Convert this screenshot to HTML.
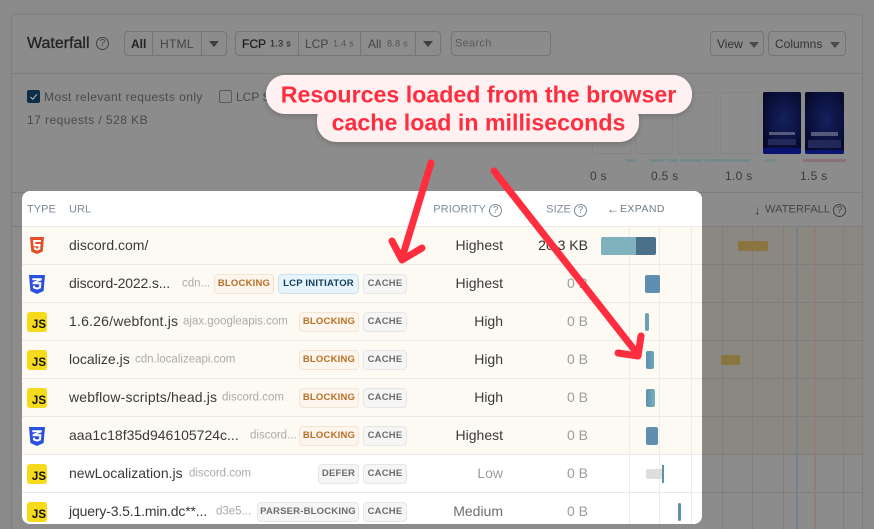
<!DOCTYPE html>
<html style="width:874px;height:529px;overflow:hidden"><head><meta charset="utf-8"><style>
*{box-sizing:border-box}
html,body{margin:0;padding:0}
body{width:874px;height:529px;overflow:hidden;background:#8a8a8a;font-family:"Liberation Sans",sans-serif;color:#333}
#root{position:absolute;left:0;top:0;width:874px;height:529px;overflow:hidden;background:#8a8a8a}
.a{position:absolute;white-space:nowrap}
.t{position:absolute;white-space:nowrap;transform:translateY(-50%);line-height:1}
.r{position:absolute;white-space:nowrap;transform:translateY(-50%);line-height:1;text-align:right}
.b{position:absolute;height:20px;border-radius:4px;font-size:9.5px;font-weight:bold;line-height:18px;text-align:center;letter-spacing:.2px;border:1px solid}
.bl{background:#fdf6ee;border-color:#f3e4d4;color:#b96f24}
.ca{background:#f5f5f5;border-color:#e6e6e6;color:#6c6c6c}
.lc{background:#e7f4fb;border-color:#c9e2f0;color:#123f5c}
.rw{position:absolute;left:0;width:680px;height:38px;border-bottom:1px solid #e9e9e6}
.u{position:absolute;white-space:nowrap;transform:translateY(-50%);line-height:1;font-size:14px;color:#3a3a3a;left:47px}
.d{position:absolute;white-space:nowrap;transform:translateY(-50%);line-height:1;font-size:11.5px;color:#ababab}
.p{position:absolute;white-space:nowrap;transform:translateY(-50%);line-height:1;font-size:14px;color:#3a3a3a;right:199px}
.s{position:absolute;white-space:nowrap;transform:translateY(-50%);line-height:1;font-size:14px;color:#9c9c9c;right:114px}
.js{position:absolute;left:5px;width:20px;height:20px;border-radius:3px;background:#f6da1c;color:#111;font-size:11.5px;font-weight:bold;line-height:1;text-align:right;padding:8px 1px 0 0}
.bar{position:absolute;border-radius:2px}
.th{position:absolute;top:92px;height:62px;border:1px solid #858585;border-radius:2px;background:#8c8c8c}
.dk{position:absolute;top:92px;height:62px;border-radius:2px;overflow:hidden;background:radial-gradient(ellipse at 55% 45%,#141f5c 0,#0c1240 50%,#03041a 100%)}
.st{position:absolute;top:159px;height:3px}
.q{position:absolute;border-radius:50%;border:1px solid;font-size:10px;line-height:11px;text-align:center;width:13px;height:13px}
.g{position:absolute;width:1px}
.btn{position:absolute;top:31px;height:25px;border:1px solid #757575;border-radius:4px}
.dv{position:absolute;top:31px;width:1px;height:25px;background:#757575}
.tri{position:absolute;width:0;height:0;border-left:5px solid transparent;border-right:5px solid transparent;border-top:6px solid #3f3f3f}
</style></head><body><div id="root">

<!-- card -->
<div class="a" style="left:11px;top:14px;width:852px;height:515px;background:#8c8c8c;border:1px solid #7e7e7e;border-bottom:0;border-radius:4px 4px 0 0"></div>
<div class="a" style="left:12px;top:73px;width:850px;height:1px;background:#7e7e7e"></div>
<div class="a" style="left:12px;top:192px;width:850px;height:1px;background:#7e7e7e"></div>

<!-- toolbar -->
<div class="t" style="left:27px;top:44px;font-size:16px;color:#222;-webkit-text-stroke:.3px #222">Waterfall</div>
<div class="q" style="left:96px;top:37px;border-color:#444;color:#444">?</div>

<div class="btn" style="left:124px;width:103px"></div>
<div class="dv" style="left:152px"></div><div class="dv" style="left:201px"></div>
<div class="t" style="left:131px;top:44px;font-size:12px;font-weight:bold;color:#222">All</div>
<div class="t" style="left:160px;top:44px;font-size:12px;color:#444;letter-spacing:.3px">HTML</div>
<div class="tri" style="left:209px;top:41px"></div>

<div class="btn" style="left:235px;width:206px"></div>
<div class="dv" style="left:298px"></div><div class="dv" style="left:360px"></div><div class="dv" style="left:415px"></div>
<div class="t" style="left:242px;top:44px;font-size:12px;color:#222;-webkit-text-stroke:.3px #222">FCP</div>
<div class="t" style="left:270px;top:44px;font-size:9px;color:#333;letter-spacing:.3px;-webkit-text-stroke:.2px #333">1.3 s</div>
<div class="t" style="left:305px;top:44px;font-size:12px;color:#444">LCP</div>
<div class="t" style="left:333px;top:44px;font-size:9px;color:#555;letter-spacing:.3px">1.4 s</div>
<div class="t" style="left:368px;top:44px;font-size:12px;color:#444">All</div>
<div class="t" style="left:387px;top:44px;font-size:9px;color:#555;letter-spacing:.3px">8.8 s</div>
<div class="tri" style="left:423px;top:41px"></div>

<div class="btn" style="left:451px;width:100px"></div>
<div class="t" style="left:455px;top:44px;font-size:11px;color:#5a5a5a;letter-spacing:.3px">Search</div>

<div class="btn" style="left:710px;width:54px"></div>
<div class="t" style="left:717px;top:44px;font-size:12px;color:#333">View</div>
<div class="tri" style="left:749px;top:42px;border-top-color:#4a4a4a"></div>
<div class="btn" style="left:768px;width:78px"></div>
<div class="t" style="left:775px;top:44px;font-size:12px;color:#333">Columns</div>
<div class="tri" style="left:830px;top:42px;border-top-color:#4a4a4a"></div>

<!-- filters -->
<div class="a" style="left:27px;top:90px;width:13px;height:13px;border-radius:2px;background:#0e2e47"></div>
<svg class="a" style="left:27px;top:90px" width="13" height="13"><path d="M3.5 7l2.3 2.3 4-5" fill="none" stroke="#b8c4cc" stroke-width="1"/></svg>
<div class="t" style="left:44px;top:97px;font-size:12px;color:#4a4a4a;letter-spacing:.45px">Most relevant requests only</div>
<div class="a" style="left:219px;top:90px;width:13px;height:13px;border-radius:2px;border:1px solid #5a5a5a"></div>
<div class="t" style="left:236px;top:97px;font-size:12px;color:#4a4a4a">LCP Subparts</div>
<div class="t" style="left:27px;top:120px;font-size:12px;color:#4a4a4a;letter-spacing:.45px">17 requests / 528 KB</div>

<!-- thumbnails -->
<div class="th" style="left:592px;width:39px"></div>
<div class="th" style="left:635px;width:38px"></div>
<div class="th" style="left:677px;width:39px"></div>
<div class="th" style="left:720px;width:39px"></div>
<div class="dk" style="left:763px;width:38px"><div style="position:absolute;left:0;right:0;bottom:0;height:6px;background:#0a1470"></div><div style="position:absolute;left:6px;right:6px;top:40px;height:3px;background:#55597c"></div><div style="position:absolute;left:5px;right:5px;top:47px;height:6px;background:#222858"></div></div>
<div class="dk" style="left:805px;width:39px"><div style="position:absolute;left:0;right:0;bottom:0;height:4px;background:#0a1470"></div><div style="position:absolute;left:6px;right:6px;top:40px;height:4px;background:#55597c"></div><div style="position:absolute;left:3px;right:3px;top:48px;height:8px;background:#222858"></div></div>

<div class="st" style="left:626px;width:10px;background:#75898d"></div>
<div class="st" style="left:650px;width:15px;background:#75898d"></div>
<div class="st" style="left:668px;width:10px;background:#75898d"></div>
<div class="st" style="left:680px;width:22px;background:#75898d"></div>
<div class="st" style="left:705px;width:45px;background:#75898d"></div>
<div class="st" style="left:765px;width:10px;background:#75898d"></div>
<div class="st" style="left:803px;width:43px;background:#8a6f7c"></div>

<div class="t" style="left:590px;top:176px;font-size:12px;color:#3c3c3c;letter-spacing:.3px">0 s</div>
<div class="t" style="left:651px;top:176px;font-size:12px;color:#3c3c3c;letter-spacing:.3px">0.5 s</div>
<div class="t" style="left:725px;top:176px;font-size:12px;color:#3c3c3c;letter-spacing:.3px">1.0 s</div>
<div class="t" style="left:800px;top:176px;font-size:12px;color:#3c3c3c;letter-spacing:.3px">1.5 s</div>

<!-- dim right side rows -->
<div class="a" style="left:702px;top:227px;width:160px;height:228px;background:#8a8880"></div>
<div class="a" style="left:12px;top:226px;width:850px;height:1px;background:#7e7e7e"></div>
<div class="a" style="left:702px;top:264px;width:160px;height:1px;background:#7e7d78"></div>
<div class="a" style="left:702px;top:302px;width:160px;height:1px;background:#7e7d78"></div>
<div class="a" style="left:702px;top:340px;width:160px;height:1px;background:#7e7d78"></div>
<div class="a" style="left:702px;top:378px;width:160px;height:1px;background:#7e7d78"></div>
<div class="a" style="left:702px;top:416px;width:160px;height:1px;background:#7e7d78"></div>
<div class="a" style="left:702px;top:454px;width:160px;height:1px;background:#7e7d78"></div>
<div class="a" style="left:702px;top:492px;width:160px;height:1px;background:#7e7d78"></div>
<div class="g" style="left:722px;top:227px;height:302px;background:#7f7f7b"></div>
<div class="g" style="left:752px;top:227px;height:302px;background:#7f7f7b"></div>
<div class="g" style="left:783px;top:227px;height:302px;background:#7f7f7b"></div>
<div class="g" style="left:843px;top:227px;height:302px;background:#7f7f7b"></div>
<div class="a" style="left:796px;top:227px;width:2px;height:302px;background:#77808f"></div>
<div class="a" style="left:814px;top:227px;width:2px;height:302px;background:#927e76"></div>
<div class="bar" style="left:738px;top:241px;width:30px;height:10px;background:#8a7440"></div>
<div class="bar" style="left:721px;top:355px;width:19px;height:10px;background:#8a7440"></div>
<div class="t" style="left:754px;top:210px;font-size:13px;color:#444">↓</div>
<div class="t" style="left:765px;top:210px;font-size:11px;color:#444;letter-spacing:.1px">WATERFALL</div>
<div class="q" style="left:833px;top:204px;border-color:#444;color:#444">?</div>

<!-- white panel -->
<div class="a" style="left:22px;top:191px;width:680px;height:333px;background:#fff;border-radius:8px;overflow:hidden">
  <div class="a" style="left:0;top:36px;width:680px;height:228px;background:#fdfaf4"></div>
  <div class="rw" style="top:-3px;height:39px"></div>
  <div class="rw" style="top:36px"></div>
  <div class="rw" style="top:74px"></div>
  <div class="rw" style="top:112px"></div>
  <div class="rw" style="top:150px"></div>
  <div class="rw" style="top:188px"></div>
  <div class="rw" style="top:226px"></div>
  <div class="rw" style="top:264px"></div>
  <div class="g" style="left:607px;top:36px;height:297px;background:#ebebe7"></div>
  <div class="g" style="left:637px;top:36px;height:297px;background:#ebebe7"></div>
  <div class="g" style="left:669px;top:36px;height:297px;background:#ebebe7"></div>

  <div class="t" style="left:5px;top:19px;font-size:11px;color:#7d8b99;letter-spacing:.05px">TYPE</div>
  <div class="t" style="left:47px;top:19px;font-size:11px;color:#7d8b99;letter-spacing:.05px">URL</div>
  <div class="r" style="right:216px;top:19px;font-size:11px;color:#7d8b99;letter-spacing:.1px">PRIORITY</div>
  <div class="q" style="left:467px;top:13px;border-color:#7d8b99;color:#7d8b99">?</div>
  <div class="r" style="right:131px;top:19px;font-size:11px;color:#7d8b99;letter-spacing:.1px">SIZE</div>
  <div class="q" style="left:552px;top:13px;border-color:#7d8b99;color:#7d8b99">?</div>
  <div class="t" style="left:585px;top:18px;font-size:12px;color:#5d6a76">←</div>
  <div class="t" style="left:598px;top:18px;font-size:10.5px;color:#6f7c88;letter-spacing:.4px">EXPAND</div>

  <!-- row 1 -->
  <svg class="a" style="left:8px;top:46px" width="14" height="17" viewBox="0 0 14 17"><path d="M0 0h14l-1.3 14.6L7 17l-5.7-2.4z" fill="#e44d26"/><path d="M3 3h8l-.2 2H5.2l.2 2h5.2l-.5 5.5L7 13.6l-3-1.1-.2-2.3h1.9l.1 1 1.2.4 1.2-.4.2-1.9H3.5z" fill="#fff"/></svg>
  <div class="u" style="top:54px">discord.com/</div>
  <div class="p" style="top:54px">Highest</div>
  <div class="s" style="top:54px;color:#333">20.3 KB</div>
  <div class="bar" style="left:579px;top:46px;width:35px;height:18px;background:#7fb2bc;border-radius:2px 0 0 2px"></div>
  <div class="bar" style="left:614px;top:46px;width:20px;height:18px;background:#4a7189;border-radius:0 2px 2px 0"></div>

  <!-- row 2 -->
  <svg class="a" style="left:7px;top:84px" width="16" height="19" viewBox="0 0 16 19"><path d="M0 0h16l-1.4 16L8 19l-6.6-3z" fill="#2a50e0"/><path d="M3.2 3.2h9.6l-.2 2-5 2.1h4.8l-.5 6L8 14.6l-3.9-1.3-.2-2.6h2l.1 1.2 2 .6 2-.6.2-2.6H3.7l-.2-1.9 5-2.1H3.4z" fill="#fff"/></svg>
  <div class="u" style="top:92px;letter-spacing:-.15px">discord-2022.s...</div>
  <div class="d" style="left:160px;top:93px">cdn...</div>
  <div class="b bl" style="left:192px;top:83px;width:60px">BLOCKING</div>
  <div class="b lc" style="left:256px;top:83px;width:81px">LCP INITIATOR</div>
  <div class="b ca" style="left:341px;top:83px;width:44px">CACHE</div>
  <div class="p" style="top:92px">Highest</div>
  <div class="s" style="top:92px">0 B</div>
  <div class="bar" style="left:623px;top:84px;width:15px;height:18px;background:#5f8fae"></div>

  <!-- row 3 -->
  <div class="js" style="top:121px">JS</div>
  <div class="u" style="top:130px;letter-spacing:.2px">1.6.26/webfont.js</div>
  <div class="d" style="left:161px;top:131px">ajax.googleapis.com</div>
  <div class="b bl" style="left:277px;top:121px;width:60px">BLOCKING</div>
  <div class="b ca" style="left:341px;top:121px;width:44px">CACHE</div>
  <div class="p" style="top:130px">High</div>
  <div class="s" style="top:130px">0 B</div>
  <div class="bar" style="left:623px;top:122px;width:4px;height:18px;background:#6ba0b5"></div>

  <!-- row 4 -->
  <div class="js" style="top:159px">JS</div>
  <div class="u" style="top:168px">localize.js</div>
  <div class="d" style="left:113px;top:169px">cdn.localizeapi.com</div>
  <div class="b bl" style="left:277px;top:159px;width:60px">BLOCKING</div>
  <div class="b ca" style="left:341px;top:159px;width:44px">CACHE</div>
  <div class="p" style="top:168px">High</div>
  <div class="s" style="top:168px">0 B</div>
  <div class="bar" style="left:624px;top:160px;width:8px;height:18px;background:linear-gradient(90deg,#5f8fae,#6ba8b8)"></div>

  <!-- row 5 -->
  <div class="js" style="top:197px">JS</div>
  <div class="u" style="top:206px;letter-spacing:.15px">webflow-scripts/head.js</div>
  <div class="d" style="left:200px;top:207px">discord.com</div>
  <div class="b bl" style="left:277px;top:197px;width:60px">BLOCKING</div>
  <div class="b ca" style="left:341px;top:197px;width:44px">CACHE</div>
  <div class="p" style="top:206px">High</div>
  <div class="s" style="top:206px">0 B</div>
  <div class="bar" style="left:624px;top:198px;width:9px;height:18px;background:linear-gradient(90deg,#5f8fae,#78b2bd)"></div>

  <!-- row 6 -->
  <svg class="a" style="left:7px;top:236px" width="16" height="19" viewBox="0 0 16 19"><path d="M0 0h16l-1.4 16L8 19l-6.6-3z" fill="#2a50e0"/><path d="M3.2 3.2h9.6l-.2 2-5 2.1h4.8l-.5 6L8 14.6l-3.9-1.3-.2-2.6h2l.1 1.2 2 .6 2-.6.2-2.6H3.7l-.2-1.9 5-2.1H3.4z" fill="#fff"/></svg>
  <div class="u" style="top:244px">aaa1c18f35d946105724c...</div>
  <div class="d" style="left:228px;top:245px">discord...</div>
  <div class="b bl" style="left:277px;top:235px;width:60px">BLOCKING</div>
  <div class="b ca" style="left:341px;top:235px;width:44px">CACHE</div>
  <div class="p" style="top:244px">Highest</div>
  <div class="s" style="top:244px">0 B</div>
  <div class="bar" style="left:624px;top:236px;width:12px;height:18px;background:#5f8fae"></div>

  <!-- row 7 -->
  <div class="js" style="top:273px">JS</div>
  <div class="u" style="top:282px">newLocalization.js</div>
  <div class="d" style="left:167px;top:283px">discord.com</div>
  <div class="b ca" style="left:296px;top:273px;width:41px">DEFER</div>
  <div class="b ca" style="left:341px;top:273px;width:44px">CACHE</div>
  <div class="p" style="top:282px;color:#9c9c9c">Low</div>
  <div class="s" style="top:282px">0 B</div>
  <div class="bar" style="left:624px;top:278px;width:17px;height:10px;background:#dedede"></div>
  <div class="bar" style="left:640px;top:274px;width:2px;height:18px;background:#5f8fae;border-radius:0"></div>

  <!-- row 8 -->
  <div class="js" style="top:311px">JS</div>
  <div class="u" style="top:320px;letter-spacing:-.15px">jquery-3.5.1.min.dc**...</div>
  <div class="d" style="left:194px;top:321px">d3e5...</div>
  <div class="b ca" style="left:235px;top:311px;width:102px">PARSER-BLOCKING</div>
  <div class="b ca" style="left:341px;top:311px;width:44px">CACHE</div>
  <div class="p" style="top:320px;color:#6e6e6e">Medium</div>
  <div class="s" style="top:320px">0 B</div>
  <div class="bar" style="left:656px;top:312px;width:3px;height:18px;background:#5f8fae"></div>
</div>

<!-- arrows -->
<svg class="a" style="left:0;top:0" width="874" height="529">
  <g fill="none" stroke="#ff2d3d" stroke-width="7" stroke-linecap="round" stroke-linejoin="round">
    <path d="M431 163L402 258M392 241L402 260L422 248"/>
    <path d="M494 171L636 352M641 336L638 356L618 353"/>
  </g>
</svg>

<!-- callout -->
<div class="a" style="left:266px;top:75px;width:426px;height:39px;background:#fff0f1;border-radius:19px;box-shadow:0 2px 6px rgba(0,0,0,.18)"></div>
<div class="a" style="left:317px;top:100px;width:322px;height:42px;background:#fff0f1;border-radius:19px;box-shadow:0 2px 6px rgba(0,0,0,.18)"></div>
<div class="a" style="left:266px;top:75px;width:426px;height:39px;background:#fff0f1;border-radius:19px"></div>
<div class="t" style="left:0;width:957px;top:95px;text-align:center;font-size:23.2px;font-weight:bold;color:#ff2d3d">Resources loaded from the browser</div>
<div class="t" style="left:0;width:957px;top:123px;text-align:center;font-size:23.2px;font-weight:bold;color:#ff2d3d">cache load in milliseconds</div>

</div></body></html>
